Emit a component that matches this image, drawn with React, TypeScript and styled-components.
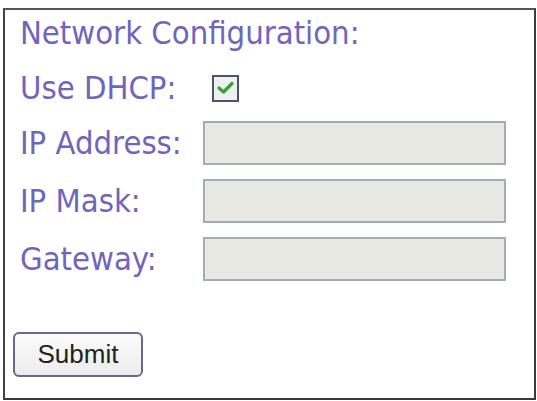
import React from "react";
import styled, { createGlobalStyle } from "styled-components";

const Global = createGlobalStyle`
  html, body { margin: 0; padding: 0; background: #ffffff; }
  body { width: 537px; height: 401px; overflow: hidden; }
`;

const Panel = styled.div`
  box-sizing: border-box;
  margin: 8px 0 0 3px;
  width: 533px;
  height: 392px;
  border: 2px solid #3a3a3a;
  border-top-color: #555;
  border-left-color: #444;
  background: #fff;
  padding: 0 0 0 15px;
  display: flex;
  flex-direction: column;
`;

const textStyle = `
  font-family: "DejaVu Sans Condensed", "DejaVu Sans", Verdana, sans-serif;
  font-stretch: condensed;
  font-size: 32.5px;
  color: #6f65bc;
  white-space: nowrap;
`;

const Title = styled.div`
  height: 46px;
  display: flex;
  align-items: center;
  ${textStyle}
`;

const Row = styled.div<{ $top: number }>`
  display: flex;
  align-items: center;
  height: 44px;
  margin-top: ${(p) => p.$top}px;
`;

const Label = styled.label`
  width: 183px;
  flex: none;
  ${textStyle}
`;

const Field = styled.div`
  box-sizing: border-box;
  width: 303px;
  height: 44px;
  border: 2px solid #a3abbb;
  background: #e9e9e4;
`;

const CheckBox = styled.span`
  box-sizing: border-box;
  margin-left: 9px;
  width: 27px;
  height: 27px;
  border: 2px solid #4b5470;
  background: #eef2ee;
  display: flex;
  align-items: center;
  justify-content: center;
`;

const ButtonRow = styled.div`
  margin-top: 51px;
  margin-left: -7px;
`;

const SubmitButton = styled.button`
  box-sizing: border-box;
  width: 130px;
  height: 45px;
  border: 2px solid #5f6e86;
  border-radius: 6px;
  background: linear-gradient(#fbfbfb, #ececec);
  font-family: "Liberation Sans", Arial, sans-serif;
  font-size: 26px;
  color: #222;
  padding: 0;
  cursor: pointer;
`;

const fields = [
  { label: "IP Address:", top: 11 },
  { label: "IP Mask:", top: 14 },
  { label: "Gateway:", top: 14 },
];

export default function App() {
  return (
    <>
      <Global />
      <Panel>
        <Title>Network Configuration:</Title>
        <Row $top={10}>
          <Label>Use DHCP:</Label>
          <CheckBox>
            <svg width="17" height="14" viewBox="0 0 17 14">
              <path
                d="M2 7 L6.5 11 L15 2.5"
                fill="none"
                stroke="#38a038"
                strokeWidth="3.2"
                strokeLinecap="round"
                strokeLinejoin="round"
              />
            </svg>
          </CheckBox>
        </Row>
        {fields.map((f) => (
          <Row key={f.label} $top={f.top}>
            <Label>{f.label}</Label>
            <Field />
          </Row>
        ))}
        <ButtonRow>
          <SubmitButton>Submit</SubmitButton>
        </ButtonRow>
      </Panel>
    </>
  );
}
